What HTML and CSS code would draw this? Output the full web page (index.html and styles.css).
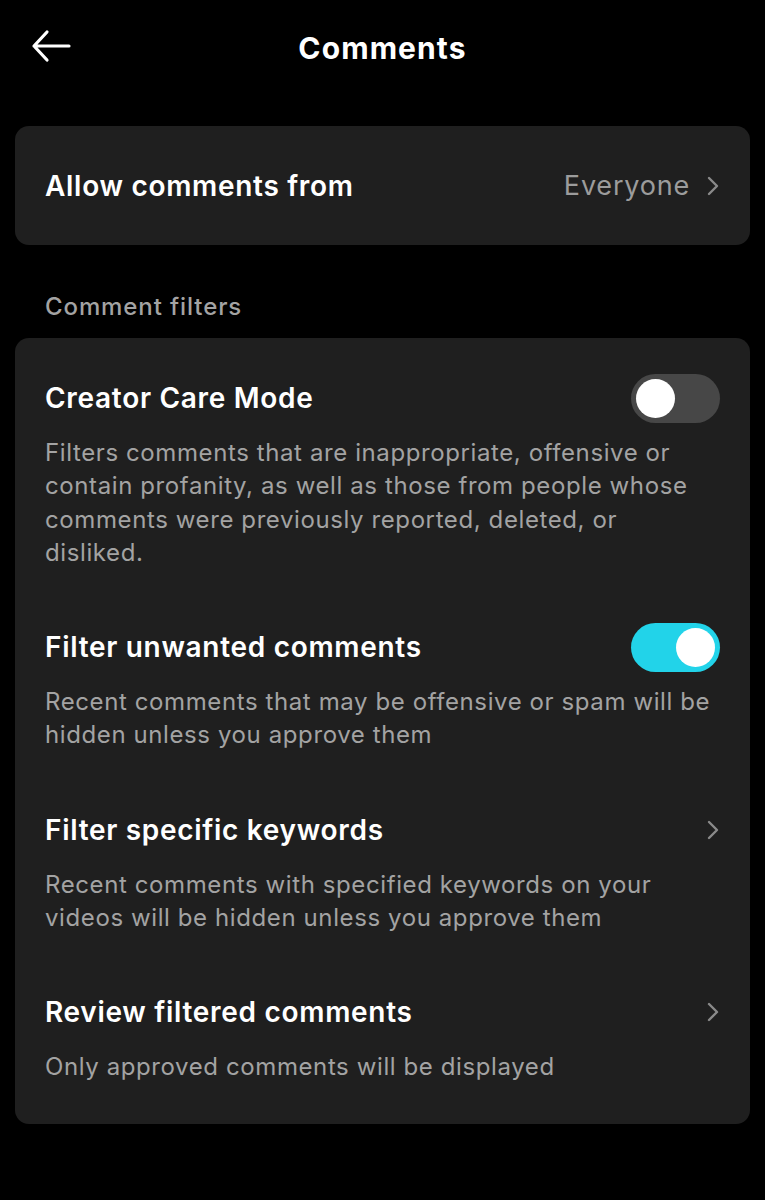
FILE: index.html
```html
<!DOCTYPE html>
<html lang="en">
<head>
    <meta charset="UTF-8">
    <meta name="viewport" content="width=device-width, initial-scale=1.0">
    <title>Comments</title>
    <link rel="stylesheet" href="styles.css">
</head>
<body>
    <header class="topbar">
        <button class="back" aria-label="Back">
            <svg width="40" height="34" viewBox="0 0 40 34"><path d="M16 3 L3 17 L16 31 M3 17 H38" fill="none" stroke="#fff" stroke-width="3.2" stroke-linecap="round" stroke-linejoin="round"/></svg>
        </button>
        <h1>Comments</h1>
    </header>

    <section class="card single">
        <div class="row">
            <span class="title">Allow comments from</span>
            <span class="value">Everyone
                <svg class="chev" width="14" height="22" viewBox="0 0 14 22"><path d="M3 3 L11 11 L3 19" fill="none" stroke="#8a8a8a" stroke-width="2.4" stroke-linecap="round" stroke-linejoin="round"/></svg>
            </span>
        </div>
    </section>

    <h2 class="section-label">Comment filters</h2>

    <section class="card list">
        <div class="item">
            <div class="row">
                <span class="title">Creator Care Mode</span>
                <span class="toggle"><span class="knob"></span></span>
            </div>
            <p class="desc">Filters comments that are inappropriate, offensive or contain profanity, as well as those from people whose comments were previously reported, deleted, or disliked.</p>
        </div>
        <div class="item">
            <div class="row">
                <span class="title">Filter unwanted comments</span>
                <span class="toggle on"><span class="knob"></span></span>
            </div>
            <p class="desc">Recent comments that may be offensive or spam will be hidden unless you approve them</p>
        </div>
        <div class="item">
            <div class="row">
                <span class="title">Filter specific keywords</span>
                <svg class="chev" width="14" height="22" viewBox="0 0 14 22"><path d="M3 3 L11 11 L3 19" fill="none" stroke="#8a8a8a" stroke-width="2.4" stroke-linecap="round" stroke-linejoin="round"/></svg>
            </div>
            <p class="desc">Recent comments with specified keywords on your videos will be hidden unless you approve them</p>
        </div>
        <div class="item">
            <div class="row">
                <span class="title">Review filtered comments</span>
                <svg class="chev" width="14" height="22" viewBox="0 0 14 22"><path d="M3 3 L11 11 L3 19" fill="none" stroke="#8a8a8a" stroke-width="2.4" stroke-linecap="round" stroke-linejoin="round"/></svg>
            </div>
            <p class="desc">Only approved comments will be displayed</p>
        </div>
    </section>
</body>
</html>
```

FILE: styles.css
```css
body { margin: 0; background: #000; color: #fff; font-family: Inter, "Noto Sans", sans-serif; width: 765px; }
.topbar { position: relative; height: 96px; display: flex; align-items: center; justify-content: center; }
.topbar h1 { margin: 0; font-size: 30px; font-weight: 700; letter-spacing: 1.1px; }
.back { position: absolute; left: 31px; top: 29px; background: none; border: none; padding: 0; line-height: 0; }
.card { background: #1f1f1f; border-radius: 14px; margin: 0 15px; }
.card.single { margin-top: 30px; height: 119px; display: flex; align-items: center; padding: 0 30px; box-sizing: border-box; }
.card.single .row { width: 100%; }
.row { display: flex; align-items: center; justify-content: space-between; }
.title { font-size: 28px; font-weight: 600; letter-spacing: 0.7px; }
.value { display: flex; align-items: center; gap: 16px; color: #9c9c9c; font-size: 27px; letter-spacing: 0.8px; }
.section-label { margin: 44px 0 0 45px; font-size: 24px; font-weight: 500; color: #a3a3a3; height: 49px; line-height: 36px; letter-spacing: 0.9px; }
.list { padding: 35px 30px 40px; }
.item + .item { margin-top: 53px; }
.item .row { min-height: 50px; }
.desc { margin: 13px 0 0; font-size: 24px; line-height: 33.3px; color: #a3a3a3; letter-spacing: 0.6px; }
.toggle { width: 89px; height: 49px; border-radius: 25px; background: #474747; position: relative; display: inline-block; }
.toggle .knob { position: absolute; top: 5px; left: 5px; width: 39px; height: 39px; border-radius: 50%; background: #fff; }
.toggle.on { background: #22d3e9; }
.toggle.on .knob { left: 45px; }
```
